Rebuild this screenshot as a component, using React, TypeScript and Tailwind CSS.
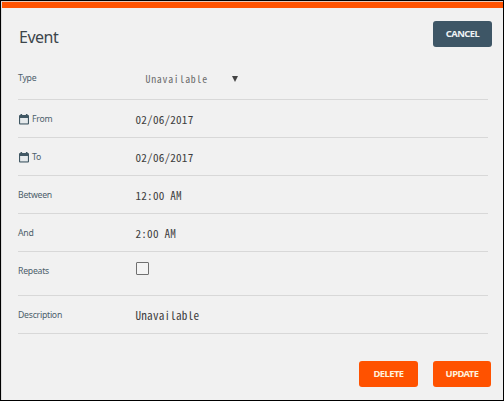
import React from "react";

const mono = "font-['Noto_Sans_Mono_CJK_SC','DejaVu_Sans_Mono',monospace]";

function CalendarIcon() {
  return (
    <svg width="10" height="11" viewBox="0 0 10 11" className="mr-[3px] ml-px shrink-0">
      <path d="M1.5 0h1.6v1h3.8V0h1.6v1H9q1 0 1 1v7.5q0 1-1 1H1q-1 0-1-1V2q0-1 1-1h.5z" fill="#415864" />
      <path d="M1.1 4h7.8v5.4H1.1z" fill="#e6eaec" />
    </svg>
  );
}

function Row({ label, icon, height, pad, children }: {
  label: string;
  icon?: boolean;
  height: string;
  pad: string;
  children: React.ReactNode;
}) {
  return (
    <div className={`flex border-b border-[#d8d8d8] ${height}`}>
      <div className={`flex h-3 w-[117.5px] shrink-0 items-center text-[8.7px] leading-3 tracking-[-0.25px] text-[#4c606b] ${pad}`}>
        {icon && <CalendarIcon />}
        <span>{label}</span>
      </div>
      {children}
    </div>
  );
}

function Value({ children }: { children: React.ReactNode }) {
  return <div className={`mt-[13px] text-[11.2px] leading-3 tracking-[0.2px] whitespace-pre text-[#3e3e3e] ${mono}`}>{children}</div>;
}

function Button({ label, style }: { label: string; style: string }) {
  return (
    <button className={`h-[26px] rounded-[3px] pb-px text-[9.4px] leading-none font-bold tracking-[-0.55px] ${style}`}>{label}</button>
  );
}

export default function App() {
  return (
    <div className="h-[401px] w-[504px] overflow-hidden border border-black bg-[#f1f1f1] font-['Noto_Sans',sans-serif]">
      <div className="h-[399px] border-t border-l border-t-[#e9c9b8] border-l-[#dcdcdc]">
        <div className="h-[6px] bg-[#ff5200]" />
        <header className="flex h-[53px] justify-between pr-[11px] pl-[17px]">
          <h1 className="mt-[18px] text-[16px] leading-[22px] tracking-[-0.5px] text-[#3c454b]">Event</h1>
          <Button label="CANCEL" style="mt-[13px] w-[59px] bg-[#3e5666] text-[#eef2f4]" />
        </header>
        <main className="mr-[15px] ml-4">
          <Row label="Type" height="h-[39px]" pad="mt-[11px]">
            <div className={`mt-[12px] ml-[10px] flex h-3 w-[92px] items-center justify-between text-[9.8px] leading-3 tracking-[0.77px] text-[#6c6c6c] ${mono}`}>
              <span>Unavailable</span>
              <svg width="6" height="6" viewBox="0 0 6 6"><path d="M0 0h6L3 6z" fill="#444" /></svg>
            </div>
          </Row>
          <Row label="From" icon height="h-[38px]" pad="mt-[13px]"><Value>02/06/2017</Value></Row>
          <Row label="To" icon height="h-[38px]" pad="mt-[13px]"><Value>02/06/2017</Value></Row>
          <Row label="Between" height="h-[38px]" pad="mt-[13px]"><Value>12:00 AM</Value></Row>
          <Row label="And" height="h-[38px]" pad="mt-[13px]"><Value>2:00 AM</Value></Row>
          <Row label="Repeats" height="h-[44px]" pad="mt-[13px]">
            <input type="checkbox" aria-label="Repeats" className="mt-[10px] ml-[0.5px] size-[13px] appearance-none rounded-[1px] border border-[#707070] bg-[#f4f4f4]" />
          </Row>
          <Row label="Description" height="h-[38px]" pad="mt-[13px]"><Value>Unavailable</Value></Row>
        </main>
        <footer className="mt-[27px] flex justify-end gap-[15px] pr-3">
          <Button label="DELETE" style="w-[59px] bg-[#ff5200] text-[#fff0dc]" />
          <Button label="UPDATE" style="w-[58px] bg-[#ff5200] text-[#fff0dc]" />
        </footer>
      </div>
    </div>
  );
}
